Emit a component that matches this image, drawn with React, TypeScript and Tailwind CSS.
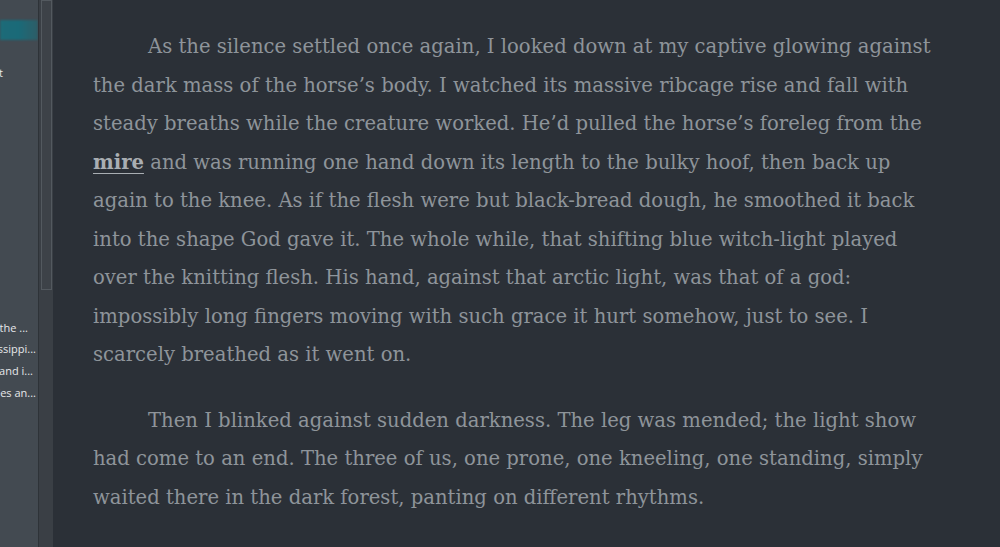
import React from "react";

const para1 = [
  "As the silence settled once again, I looked down at my captive glowing against",
  "the dark mass of the horse’s body. I watched its massive ribcage rise and fall with",
  "steady breaths while the creature worked. He’d pulled the horse’s foreleg from the",
  "__MIRE__",
  "again to the knee. As if the flesh were but black-bread dough, he smoothed it back",
  "into the shape God gave it. The whole while, that shifting blue witch-light played",
  "over the knitting flesh. His hand, against that arctic light, was that of a god:",
  "impossibly long fingers moving with such grace it hurt somehow, just to see. I",
  "scarcely breathed as it went on.",
];

const para2 = [
  "Then I blinked against sudden darkness. The leg was mended; the light show",
  "had come to an end. The three of us, one prone, one kneeling, one standing, simply",
  "waited there in the dark forest, panting on different rhythms.",
];

// left part of each title is hidden under the collapsed binder
const sideItems = [
  { text: "Down the ...", pr: "pr-[10px]" },
  { text: "Mississippi...", pr: "pr-[2px]" },
  { text: "Fire and i...", pr: "pr-[5px]" },
  { text: "Enemies an...", pr: "pr-[2px]" },
];

function Para({ lines }: { lines: string[] }) {
  return (
    <div>
      {lines.map((l, i) => (
        <div key={i} className={`h-[38.5px] whitespace-nowrap ${i === 0 ? "pl-[55px]" : ""}`}>
          {l === "__MIRE__" ? (
            <>
              <span className="font-bold text-[#a9aeb3] underline underline-offset-[4px]">mire</span>
              {" and was running one hand down its length to the bulky hoof, then back up"}
            </>
          ) : (
            l
          )}
        </div>
      ))}
    </div>
  );
}

export default function App() {
  return (
    <div className="flex h-[547px] w-[1000px] overflow-hidden bg-[#2b3037]">
      <aside className="relative w-[38px] shrink-0 overflow-hidden bg-[#434a51] text-[11px] text-[#e6e8ea] [font-family:'Open_Sans','Noto_Sans',sans-serif]">
        <div className="mt-[20px] h-[20px] bg-gradient-to-r from-[#1d6b78] via-[#1a6a78] to-[#2c5d67] blur-[1px]" />
        <div className="mt-[25px] flex justify-end whitespace-nowrap pr-[35px]">Draft</div>
        <div className="mt-[238px] flex flex-col">
          {sideItems.map((s) => (
            <div key={s.text} className={`flex h-[21.7px] justify-end whitespace-nowrap ${s.pr}`}>
              {s.text}
            </div>
          ))}
        </div>
      </aside>
      <div className="w-[1px] shrink-0 bg-[#2e3338]" />
      <div className="flex w-[14px] shrink-0 justify-center bg-[#3a3f45]">
        <div className="h-[290px] w-[11px] border border-[#53595f] bg-[#3d4248]" />
      </div>
      <main className="flex-1 pl-[40px] pt-[32px] text-[19.6px] text-[#8e949a] [font-family:'DejaVu_Serif',serif]">
        <Para lines={para1} />
        <div className="h-[27px]" />
        <Para lines={para2} />
      </main>
    </div>
  );
}
